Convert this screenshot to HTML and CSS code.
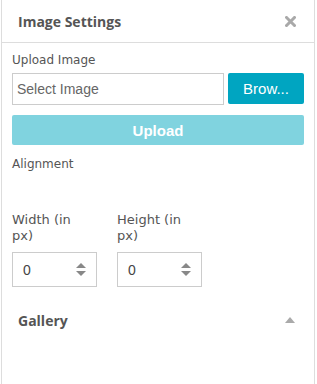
FILE: index.html
```html
<!DOCTYPE html>
<html lang="en">
<head>
  <meta charset="UTF-8" />
  <title>Image Settings</title>
  <link rel="stylesheet" href="styles.css">
</head>
<body>

<div class="panel">
    <div class="panel-header">
        <span class="panel-title">Image Settings</span>
        <svg class="close-icon" width="11" height="11" viewBox="0 0 11 11">
            <path d="M1.5 1.5 L9.5 9.5 M9.5 1.5 L1.5 9.5" stroke="#a9a9a9" stroke-width="3" stroke-linecap="square"/>
        </svg>
    </div>

    <div class="panel-body">
        <label class="field-label">Upload Image</label>
        <div class="file-row">
            <input type="text" class="file-input" placeholder="Select Image" />
            <button class="btn-browse">Brow...</button>
        </div>
        <button class="btn-upload">Upload</button>

        <label class="field-label align-label">Alignment</label>
        <div class="align-area"></div>

        <div class="size-row">
            <div class="size-col">
                <label class="field-label">Width (in px)</label>
                <div class="num-box">
                    <span>0</span>
                    <span class="spinner"><i class="up"></i><i class="down"></i></span>
                </div>
            </div>
            <div class="size-col">
                <label class="field-label">Height (in px)</label>
                <div class="num-box">
                    <span>0</span>
                    <span class="spinner"><i class="up"></i><i class="down"></i></span>
                </div>
            </div>
        </div>
    </div>

    <div class="section-header">
        <span class="section-title">Gallery</span>
        <i class="caret-up"></i>
    </div>
</div>

</body>
</html>
```

FILE: styles.css
```css
body {
    margin: 0;
    background: #fff;
    font-family: "Open Sans", "Liberation Sans", sans-serif;
}

.panel {
    margin-left: 1px;
    width: 314px;
    height: 384px;
    box-sizing: border-box;
    border-left: 1px solid #ddd;
    border-right: 1px solid #ddd;
    background: #fff;
}

/* header */
.panel-header {
    height: 42px;
    border-bottom: 1px solid #ddd;
    display: flex;
    justify-content: space-between;
    align-items: center;
    padding: 0 18px 0 16px;
}
.panel-title {
    font-size: 14px;
    font-weight: bold;
    color: #555;
}
.close-icon {
    display: block;
}

/* body */
.panel-body {
    padding: 8px 10px 0 10px;
}
.field-label {
    display: block;
    font-family: "DejaVu Sans", sans-serif;
    font-size: 12px;
    line-height: 18px;
    color: #555;
}
.file-row {
    display: flex;
    gap: 4px;
    margin-top: 4px;
}
.file-input {
    flex: 1;
    min-width: 0;
    height: 32px;
    box-sizing: border-box;
    border: 1px solid #ccc;
    padding: 0 4px;
    font-family: "Liberation Sans", Arial, sans-serif;
    font-size: 14px;
    color: #555;
    outline: none;
}
.file-input::placeholder {
    color: #666;
}
.btn-browse {
    width: 76px;
    height: 31px;
    border: none;
    border-radius: 2px;
    background: #00a5c1;
    color: #fff;
    font-family: "Liberation Sans", Arial, sans-serif;
    font-size: 15px;
    padding: 0;
}
.btn-upload {
    display: block;
    width: 100%;
    height: 30px;
    margin-top: 10px;
    border: none;
    border-radius: 2px;
    background: #80d3df;
    color: #fff;
    font-family: "Liberation Sans", Arial, sans-serif;
    font-size: 15px;
    font-weight: bold;
}
.align-label {
    margin-top: 10px;
}
.align-area {
    height: 39px;
}

/* width / height */
.size-row {
    display: flex;
    gap: 20px;
}
.size-col {
    width: 85px;
}
.size-col .field-label {
    width: 80px;
    font-size: 13px;
    line-height: 16px;
}
.num-box {
    margin-top: 8px;
    height: 35px;
    box-sizing: border-box;
    border: 1px solid #ccc;
    display: flex;
    align-items: center;
    justify-content: space-between;
    padding: 0 10px 0 10px;
    font-family: "Liberation Sans", Arial, sans-serif;
    font-size: 14px;
    color: #444;
}
.spinner {
    display: flex;
    flex-direction: column;
    gap: 3px;
}
.spinner i {
    display: block;
    width: 0;
    height: 0;
    border-left: 5px solid transparent;
    border-right: 5px solid transparent;
}
.spinner .up {
    border-bottom: 5px solid #888;
}
.spinner .down {
    border-top: 5px solid #888;
}

/* gallery section */
.section-header {
    display: flex;
    justify-content: space-between;
    align-items: center;
    padding: 0 19px 0 16px;
    margin-top: 20px;
    height: 26px;
}
.section-title {
    font-size: 14px;
    font-weight: bold;
    color: #555;
}
.caret-up {
    display: block;
    width: 0;
    height: 0;
    border-left: 5px solid transparent;
    border-right: 5px solid transparent;
    border-bottom: 6px solid #aaa;
}
```
